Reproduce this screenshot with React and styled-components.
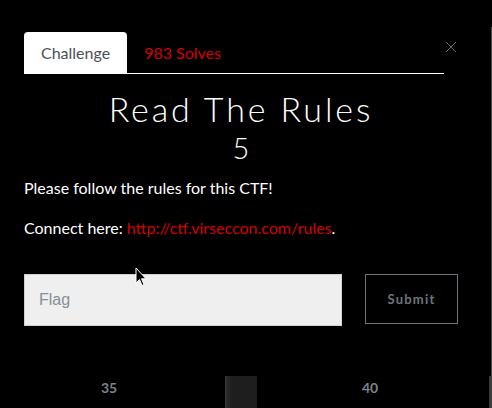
import React from "react";
import styled, { createGlobalStyle } from "styled-components";

const GlobalStyle = createGlobalStyle`
  html, body {
    margin: 0;
    background: #000;
    overflow: hidden;
  }
  body {
    font-family: "Lato", "Liberation Sans", sans-serif;
    color: #fff;
  }
`;

const Page = styled.div`
  position: relative;
  width: 492px;
  height: 408px;
  background: #000;
  overflow: hidden;
`;

const Modal = styled.div`
  width: 434px;
  padding: 32px 0 0 24px;
  position: relative;
`;

const Tabs = styled.div`
  display: flex;
  align-items: stretch;
  height: 41px;
  margin-right: 14px;
  border-bottom: 1px solid #fff;
`;

const Tab = styled.div`
  display: flex;
  align-items: center;
  padding: 0 17px;
  font-size: 16px;
  border-radius: 4px 4px 0 0;
  background: ${(p) => (p.$active ? "#fff" : "transparent")};
  color: ${(p) => (p.$active ? "#495057" : "#d40000")};
`;

const Close = styled.div`
  position: absolute;
  top: 37px;
  right: 1px;
  width: 12px;
  height: 12px;
`;

const Title = styled.h3`
  margin: 15px 0 0;
  text-align: center;
  font-weight: 300;
  font-size: 34px;
  letter-spacing: 2.9px;
  line-height: 40px;
`;

const Value = styled.h4`
  margin: 2px 0 0;
  text-align: center;
  font-weight: 300;
  font-size: 29px;
  line-height: 34px;
`;

const Text = styled.p`
  margin: ${(p) => p.$top}px 0 0;
  font-size: 16px;
  line-height: 20px;

  a {
    color: #d40000;
    text-decoration: none;
  }
`;

const FlagRow = styled.div`
  display: flex;
  gap: 23px;
  margin-top: 36px;
  align-items: flex-start;
`;

const Input = styled.input`
  box-sizing: border-box;
  width: 318px;
  height: 52px;
  padding: 0 14px;
  background: #efefef;
  border: 1px solid #d0d0d0;
  font-family: "Liberation Sans", Arial, sans-serif;
  font-size: 16px;
  color: #495057;
  outline: none;

  &::placeholder {
    color: #868e96;
  }
`;

const SubmitButton = styled.button`
  box-sizing: border-box;
  width: 93px;
  height: 50px;
  background: transparent;
  border: 1px solid #6c757d;
  color: #6c757d;
  font-family: "Lato", "Liberation Sans", sans-serif;
  font-weight: 700;
  font-size: 13px;
  letter-spacing: 1.2px;
`;

const Background = styled.div`
  position: absolute;
  left: 0;
  right: 0;
  bottom: 0;
  height: 32px;
  display: grid;
  grid-template-columns: 225px 32px 1fr;
`;

const Number = styled.span`
  font-size: 14px;
  font-weight: 700;
  color: #7b838c;
  padding-top: 3px;
  padding-left: ${(p) => p.$left}px;
`;

const Block = styled.div`
  background: linear-gradient(90deg, #3a3a3a 0, #252525 3px, #1e1e1e 8px, #1e1e1e 100%);
`;

const EdgeLine = styled.div`
  position: absolute;
  right: 0;
  top: 27px;
  width: 1px;
  height: 350px;
  background: #4a4a4a;
`;

const EdgeBar = styled.div`
  position: absolute;
  right: 0;
  bottom: 0;
  width: 3px;
  height: 32px;
  background: #3c3c3c;
`;

const Cursor = styled.svg`
  position: absolute;
  left: 135px;
  top: 267px;
`;

export default function App() {
  return (
    <Page>
      <GlobalStyle />
      <Background>
        <Number $left={101}>35</Number>
        <Block />
        <Number $left={105}>40</Number>
      </Background>
      <EdgeLine />
      <EdgeBar />
      <Modal>
        <Tabs>
          <Tab $active>Challenge</Tab>
          <Tab>983 Solves</Tab>
        </Tabs>
        <Close>
          <svg width="12" height="12" viewBox="0 0 12 12">
            <path d="M1 1L11 11M11 1L1 11" stroke="#6a6a6a" strokeWidth="1" />
          </svg>
        </Close>
        <Title>Read The Rules</Title>
        <Value>5</Value>
        <Text $top={13}>Please follow the rules for this CTF!</Text>
        <Text $top={20}>
          Connect here: <a href="#">http://ctf.virseccon.com/rules</a>.
        </Text>
        <FlagRow>
          <Input placeholder="Flag" />
          <SubmitButton>Submit</SubmitButton>
        </FlagRow>
      </Modal>
      <Cursor width="12" height="20" viewBox="0 0 12 20">
        <path d="M1 1L1 16L4.5 12.5L7 18.5L9 17.5L6.5 11.8L11 11.8Z" fill="#000" stroke="#fff" strokeWidth="1" />
      </Cursor>
    </Page>
  );
}
